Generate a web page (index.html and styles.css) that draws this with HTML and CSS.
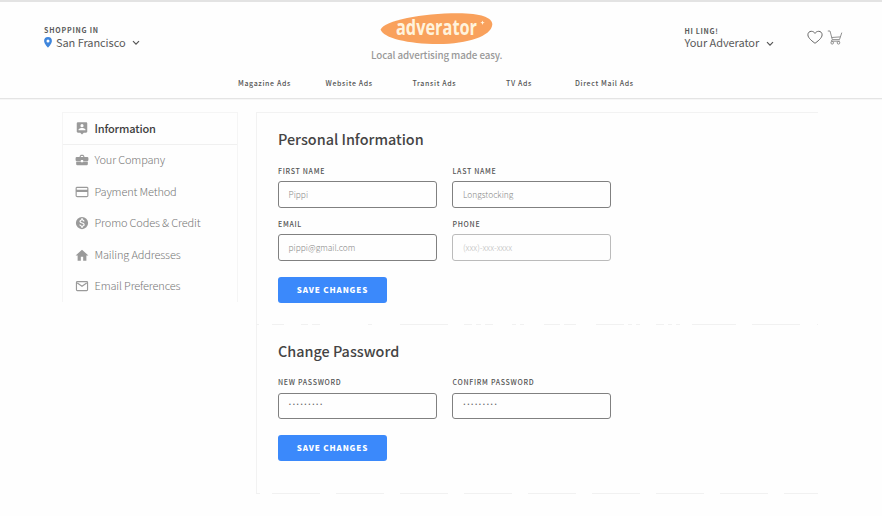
FILE: index.html
```
<!DOCTYPE html>
<html lang="en">
<head>
<meta charset="utf-8">
<title>Adverator – Account</title>
<link rel="stylesheet" href="styles.css">
</head>
<body>
<header class="header">
  <div class="topbar">
    <div class="location">
      <div class="eyebrow">SHOPPING IN</div>
      <div class="picker">
        <svg class="pin" width="8" height="11" viewBox="0 0 8 11"><path fill="#3f86dc" fill-rule="evenodd" d="M4 0a3.900 3.900 0 0 0-3.900 3.900C.1 6.700 4 10.600 4 10.600s3.900-3.900 3.900-6.700A3.900 3.900 0 0 0 4 0zm0 2.400a1.500 1.500 0 1 1 0 3 1.500 1.500 0 0 1 0-3z"/></svg>
        <span class="picker-text">San Francisco</span>
        <svg class="chev" width="8" height="6" viewBox="0 0 8 6"><path d="M1 1.200l3 3 3-3"/></svg>
      </div>
    </div>
    <div class="brand">
      <svg class="logo" width="114" height="34" viewBox="0 0 114 34">
        <path fill="#f9a15c" d="M.6 17.500C4 8.500 42 1.200 78 1.200C101 1.200 112.300 5.500 112.300 12.500C111.500 24 88 32 58 32C28 32 3 26 .6 17.500z"/>
        <text class="logo-text" x="16" y="22.800" textLength="81" lengthAdjust="spacingAndGlyphs">adverator</text>
        <path fill="#fff3dc" d="M102.500 8.500l.6 1.600 1.600.6-1.600.6-.6 1.600-.6-1.600-1.600-.6 1.600-.6z"/>
      </svg>
      <div class="tagline">Local advertising made easy.</div>
    </div>
    <div class="account">
      <div class="eyebrow hi">HI LING!</div>
      <div class="picker">
        <span class="picker-text">Your Adverator</span>
        <svg class="chev" width="8" height="6" viewBox="0 0 8 6"><path d="M1 1.200l3 3 3-3"/></svg>
      </div>
    </div>
    <div class="actions">
      <svg width="16" height="15" viewBox="0 0 16 15"><path fill="none" stroke="#666" stroke-width="1" d="M8 13.300C6 11.700.9 8.300.9 4.800.9 2.700 2.400 1.300 4.300 1.300 6 1.300 7.300 2.200 8 3.400 8.700 2.200 10 1.300 11.700 1.300c1.900 0 3.400 1.400 3.400 3.500 0 3.500-5.100 6.900-7.100 8.500z"/></svg>
      <svg width="16" height="15" viewBox="0 0 16 15"><g fill="none" stroke="#858585" stroke-width=".9"><path d="M.8 1h2.200l2.300 8.600h7.200L14.800 2.600M4.600 7.500l8.700-.6M5.300 9.600l-1 1.600h8.500"/><circle cx="5.200" cy="12.800" r="1.300"/><circle cx="11.500" cy="12.800" r="1.300"/></g></svg>
    </div>
  </div>
  <nav class="nav">
    <a>Magazine Ads</a><a>Website Ads</a><a>Transit Ads</a><a>TV Ads</a><a>Direct Mail Ads</a>
  </nav>
</header>
<main class="main">
  <aside class="side">
    <a class="item active"><svg width="14" height="14" viewBox="0 0 24 24"><path d="M19 2H5a2 2 0 0 0-2 2v14c0 1.100.9 2 2 2h4l3 3 3-3h4c1.100 0 2-.9 2-2V4c0-1.100-.9-2-2-2zm-7 3.300a2.700 2.700 0 1 1 0 5.400 2.700 2.700 0 0 1 0-5.400zM18 16H6v-.9c0-2 4-3.100 6-3.100s6 1.100 6 3.100v.9z"/></svg><span>Information</span></a>
    <a class="item"><svg width="14" height="14" viewBox="0 0 24 24"><path d="M10 16v-1H2v4a2 2 0 0 0 2 2h16a2 2 0 0 0 2-2v-4h-8v1h-4zm11-9h-5V5l-2-2h-4L8 5v2H3a2 2 0 0 0-2 2v3c0 1.100.9 2 2 2h7v-2h4v2h7a2 2 0 0 0 2-2V9a2 2 0 0 0-2-2zm-7 0h-4V5h4v2z"/></svg><span>Your Company</span></a>
    <a class="item"><svg width="14" height="14" viewBox="0 0 24 24"><path d="M20 3H4c-1.600 0-3 1-3 2.500v13c0 1.500 1.400 2.500 3 2.500h16c1.600 0 3-1 3-2.500v-13C23 4 21.600 3 20 3zM21 19H3v-7h18v7zM21 8H3V5.200h18V8z"/></svg><span>Payment Method</span></a>
    <a class="item"><svg width="14" height="14" viewBox="0 0 24 24"><path d="M12 1.500a10.500 10.500 0 1 0 0 21 10.500 10.500 0 0 0 0-21zm1.400 16.600V20h-2.700v-1.900c-1.700-.4-3.200-1.500-3.300-3.400h2c.1 1 .8 1.900 2.700 1.900 1.900 0 2.400-1 2.400-1.600 0-.8-.4-1.600-2.700-2.100-2.500-.6-4.200-1.600-4.200-3.700 0-1.700 1.400-2.800 3.100-3.200V4h2.700v2c1.900.5 2.800 1.900 2.900 3.400h-2c-.1-1.100-.6-1.900-2.200-1.900-1.500 0-2.400.7-2.400 1.600 0 .8.7 1.400 2.700 1.900s4.200 1.400 4.200 3.900c0 1.800-1.400 2.800-3.200 3.200z"/></svg><span>Promo Codes &amp; Credit</span></a>
    <a class="item"><svg width="14" height="14" viewBox="0 0 24 24"><path d="M10 22v-7h4v7h5.500v-9H23L12 3 1 13h3.500v9z"/></svg><span>Mailing Addresses</span></a>
    <a class="item"><svg width="14" height="14" viewBox="0 0 24 24"><path stroke="#9a9a9a" stroke-width="2" d="M4 4.500h16a1.500 1.500 0 0 1 1.500 1.500v12.500a1.500 1.500 0 0 1-1.500 1.500H4a1.500 1.500 0 0 1-1.500-1.500V6A1.500 1.500 0 0 1 4 4.500zM4 7l8 5.500L20 7"/></svg><span>Email Preferences</span></a>
  </aside>
  <div class="panel">
    <section class="section first">
      <h2>Personal Information</h2>
      <div class="fields">
        <label class="field"><span>FIRST NAME</span><div class="box"><span>Pippi</span></div></label>
        <label class="field"><span>LAST NAME</span><div class="box"><span>Longstocking</span></div></label>
        <label class="field"><span>EMAIL</span><div class="box"><span>pippi@gmail.com</span></div></label>
        <label class="field"><span>PHONE</span><div class="box empty"><span>(xxx)-xxx-xxxx</span></div></label>
      </div>
      <div class="btn"><span>SAVE CHANGES</span></div>
    </section>
    <svg class="rule" width="562" height="1" viewBox="0 0 562 1"><path stroke="#f1f1f1" d="M0 .5h3M16 .5h12M45 .5h7M56 .5h8M112 .5h4M144 .5h48M208 .5h8M220 .5h5M229 .5h8M256 .5h4M264 .5h4M288 .5h16M308 .5h12M340 .5h28M372 .5h4M380 .5h4M400 .5h8M412 .5h4M420 .5h4M436 .5h44M496 .5h48M561 .5h1"/></svg>
    <section class="section second">
      <h2>Change Password</h2>
      <div class="fields">
        <label class="field"><span>NEW PASSWORD</span><div class="box pw"><span>•••••••••</span></div></label>
        <label class="field"><span>CONFIRM PASSWORD</span><div class="box pw"><span>•••••••••</span></div></label>
      </div>
      <div class="btn"><span>SAVE CHANGES</span></div>
    </section>
    <svg class="rule" width="562" height="1" viewBox="0 0 562 1"><path stroke="#f1f1f1" d="M0 .5h4"/><path stroke="#f1f1f1" stroke-dasharray="48 16" d="M16 .5h546"/></svg>
  </div>
</main>
</body>
</html>
```
FILE: styles.css
```
* { box-sizing: border-box; }
body {
  margin: 0;
  width: 882px;
  height: 516px;
  overflow: hidden;
  background: #fefefe;
  font-family: "Noto Sans CJK SC", "Noto Sans", sans-serif;
  color: #4a4a4a;
}
svg { display: block; flex: none; }
span, a, h2 { white-space: nowrap; }

.header {
  height: 99px;
  border-top: 2px solid #e3e3e3;
  border-bottom: 1px solid #e4e4e4;
  box-shadow: 0 1px 0 #f6f6f6;
}
.topbar {
  display: grid;
  grid-template-columns: 327px 313.500px 122.500px 75px;
  height: 71px;
  padding-left: 44px;
}
.location { padding-top: 22px; }
.account { padding-top: 22.500px; }
.eyebrow {
  font-size: 7px;
  font-weight: 700;
  line-height: 12px;
  letter-spacing: 0.8px;
  color: #5a5a5a;
}
.eyebrow.hi { letter-spacing: 0.7px; }
.picker { display: flex; align-items: center; height: 13px; }
.pin { margin: 0 4.500px 1px -0.500px; }
.picker-text {
  margin-top: -2px;
  font-size: 11px;
  line-height: 14px;
  letter-spacing: -0.07px;
  color: #5a5a5a;
}
.chev { margin-left: 6.500px; margin-top: 1px; }
.chev path { fill: none; stroke: #555; stroke-width: 1.2; }
.brand { padding-top: 10px; }
.logo { margin-left: 9px; }
.logo-text { font-family: "Open Sans", sans-serif; font-weight: 700; font-size: 20.500px; fill: #fff3dc; }
.tagline {
  font-size: 9.800px;
  font-weight: 500;
  line-height: 16px;
  letter-spacing: -0.1px;
  margin-top: 1px;
  color: #999;
  white-space: nowrap;
}
.actions { display: flex; gap: 4px; padding-top: 28px; }
.nav {
  display: grid;
  grid-template-columns: 87.500px 87px 93.500px 69px 90px;
  padding-left: 238px;
  font-size: 7px;
  font-weight: 500;
  line-height: 20px;
  letter-spacing: 0.64px;
  color: #555;
}

.main { display: flex; gap: 18px; padding: 13px 0 0 62px; }
.side {
  width: 176px;
  height: 190px;
  border: 1px solid #f5f5f5;
  border-bottom: 0;
}
.item {
  display: flex;
  align-items: center;
  gap: 6px;
  height: 31.500px;
  padding-left: 12px;
  font-size: 11px;
  font-weight: 300;
  line-height: 16px;
  letter-spacing: -0.15px;
  color: #777;
}
.item span { margin: -2px 0 0 -0.500px; }
.item path { fill: #9a9a9a; }
.item path[stroke] { fill: none; }
.item.active { font-weight: 500; color: #3f3f3f; border-bottom: 1px solid #f0f0f0; }
.item.active span { margin-top: -1px; }

.panel {
  width: 562px;
  height: 382px;
  border-top: 1px solid #f2f2f2;
  border-left: 1px solid #f2f2f2;
}
.rule { margin-left: -1px; }
.section { padding-left: 21px; }
.first { height: 211px; padding-top: 15px; }
.second { height: 168px; padding-top: 15px; }
h2 { margin: 0; font-size: 14.400px; font-weight: 500; line-height: 21px; color: #444; }
.fields {
  display: grid;
  grid-template-columns: 158.700px 158.700px;
  column-gap: 15.800px;
  row-gap: 10px;
  margin-top: 16px;
}
.second .fields { margin-top: 15px; }
.field { display: flex; flex-direction: column; height: 43px; }
.field > span {
  font-size: 7px;
  font-weight: 500;
  line-height: 12px;
  letter-spacing: 0.7px;
  color: #555;
}
.box {
  display: flex;
  align-items: center;
  height: 27px;
  margin-top: 4px;
  padding-left: 9.500px;
  border: 1px solid #808080;
  border-radius: 3px;
  font-size: 8.400px;
  font-weight: 300;
  line-height: 14px;
  color: #888;
}
.box span { margin-top: -1px; }
.empty { border-color: #bbb; color: #bbb; }
.pw {
  align-items: flex-start;
  height: 26.500px;
  margin-top: 4.700px;
  padding-top: 4px;
  font-family: "Liberation Sans", sans-serif;
  font-size: 5px;
  font-weight: 400;
  letter-spacing: 2.150px;
  color: #666;
}
.pw span { margin-left: 0.500px; }
.btn {
  display: flex;
  align-items: center;
  justify-content: center;
  width: 109px;
  height: 26.500px;
  margin-top: 15.700px;
  border-radius: 3px;
  background: #3b89fb;
  color: #fff;
  font-size: 8px;
  font-weight: 900;
  line-height: 14px;
  letter-spacing: 0.85px;
}
```
